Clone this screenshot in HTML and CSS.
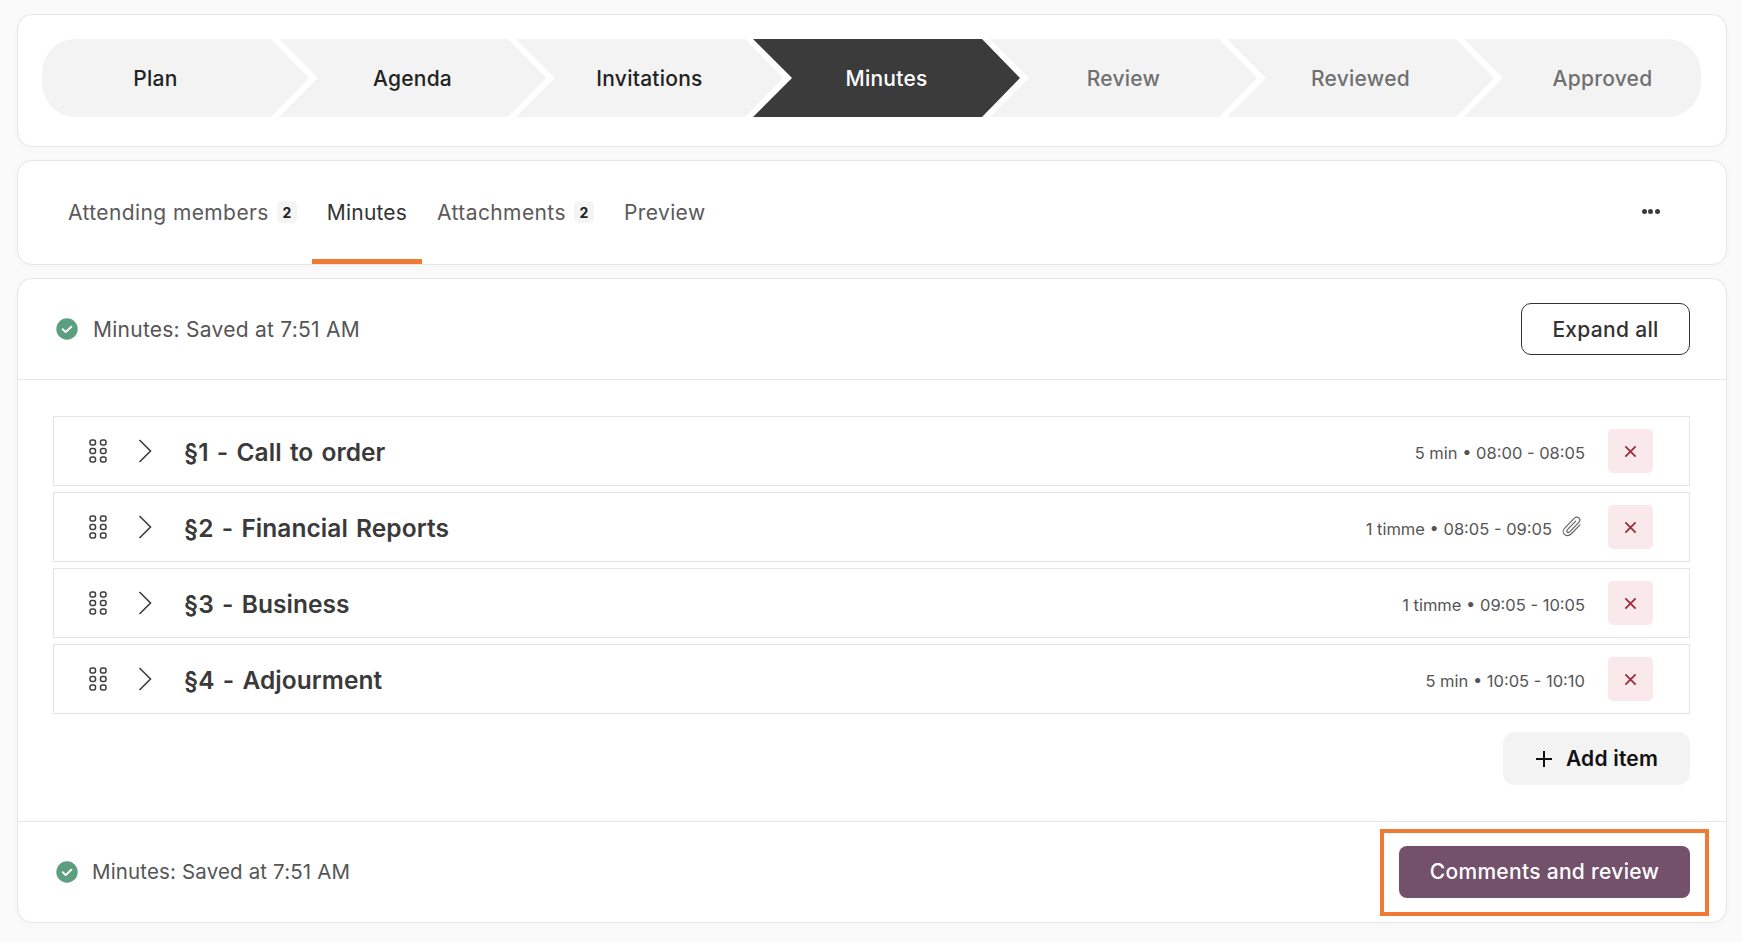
FILE: index.html
```html
<!DOCTYPE html>
<html lang="en">
<head>
<meta charset="utf-8">
<title>Minutes</title>
<link rel="stylesheet" href="styles.css">
</head>
<body>
<svg class="defs" width="0" height="0" aria-hidden="true">
  <symbol id="check" viewBox="0 0 22 22"><circle cx="11" cy="11" r="10.7" fill="#5c9e80"/><path d="M6.8 11.3l2.9 2.8 5.6-5.4" fill="none" stroke="#fff" stroke-width="2" stroke-linecap="round" stroke-linejoin="round"/></symbol>
  <symbol id="drag" viewBox="0 0 18 24"><g fill="none" stroke="#3c3c3c" stroke-width="1.5"><rect x="1" y="1" width="5.5" height="5" rx="2"/><rect x="11.5" y="1" width="5.5" height="5" rx="2"/><rect x="1" y="9.5" width="5.5" height="5" rx="2"/><rect x="11.5" y="9.5" width="5.5" height="5" rx="2"/><rect x="1" y="18" width="5.5" height="5" rx="2"/><rect x="11.5" y="18" width="5.5" height="5" rx="2"/></g></symbol>
  <symbol id="chev" viewBox="0 0 14 24"><path d="M1.5 1l11 11-11 11" fill="none" stroke="#3c3c3c" stroke-width="1.6"/></symbol>
  <symbol id="x" viewBox="0 0 14 14"><path d="M1.5 1.5l11 11M12.5 1.5l-11 11" fill="none" stroke="#9a2f3e" stroke-width="2"/></symbol>
</svg>

<section class="card stepper-card">
  <ol class="stepper">
    <li class="step step-first done">Plan</li>
    <li class="step done">Agenda</li>
    <li class="step done">Invitations</li>
    <li class="step active">Minutes</li>
    <li class="step">Review</li>
    <li class="step">Reviewed</li>
    <li class="step step-last">Approved</li>
  </ol>
</section>

<nav class="card tabs-card">
  <a class="tab">Attending members <span class="badge">2</span></a>
  <a class="tab tab-active">Minutes</a>
  <a class="tab">Attachments <span class="badge">2</span></a>
  <a class="tab">Preview</a>
  <span class="more"><i></i><i></i><i></i></span>
</nav>

<main class="card main-card">
  <header class="bar bar-top">
    <span class="saved"><svg class="ok"><use href="#check"/></svg>Minutes: Saved at 7:51 AM</span>
    <button class="btn-outline">Expand all</button>
  </header>
  <div class="content">
    <ul class="rows">
      <li class="row">
        <svg class="drag"><use href="#drag"/></svg><svg class="chev"><use href="#chev"/></svg>
        <h3 class="title">§1 - Call to order</h3>
        <span class="meta">5 min • 08:00 - 08:05</span>
        <button class="del"><svg class="x"><use href="#x"/></svg></button>
      </li>
      <li class="row">
        <svg class="drag"><use href="#drag"/></svg><svg class="chev"><use href="#chev"/></svg>
        <h3 class="title">§2 - Financial Reports</h3>
        <span class="meta">1 timme • 08:05 - 09:05</span>
        <svg class="clip" viewBox="0 0 20 20"><path d="M16.6 8.2l-7.4 7.6c-1.7 1.7-4.2 1.8-5.6.4s-1.2-3.8.5-5.5l7.7-7.9c1.2-1.2 3-1.4 4-.4s.9 2.7-.3 3.9l-7.5 7.7c-.6.6-1.5.7-2 .2s-.4-1.4.2-2l6.9-7.1" fill="none" stroke="#666" stroke-width="1" stroke-linecap="round"/></svg>
        <button class="del del-clip"><svg class="x"><use href="#x"/></svg></button>
      </li>
      <li class="row">
        <svg class="drag"><use href="#drag"/></svg><svg class="chev"><use href="#chev"/></svg>
        <h3 class="title">§3 - Business</h3>
        <span class="meta">1 timme • 09:05 - 10:05</span>
        <button class="del"><svg class="x"><use href="#x"/></svg></button>
      </li>
      <li class="row">
        <svg class="drag"><use href="#drag"/></svg><svg class="chev"><use href="#chev"/></svg>
        <h3 class="title">§4 - Adjourment</h3>
        <span class="meta">5 min • 10:05 - 10:10</span>
        <button class="del"><svg class="x"><use href="#x"/></svg></button>
      </li>
    </ul>
    <div class="add-wrap">
      <button class="btn-add"><svg class="plus" viewBox="0 0 18 18"><path d="M9 1v16M1 9h16" fill="none" stroke="#111" stroke-width="2"/></svg>Add item</button>
    </div>
  </div>
  <footer class="bar bar-bottom">
    <span class="saved saved-small"><svg class="ok"><use href="#check"/></svg>Minutes: Saved at 7:51 AM</span>
    <button class="btn-primary">Comments and review</button>
  </footer>
</main>
</body>
</html>
```

FILE: styles.css
```css
* { box-sizing: border-box; }
html, body { margin: 0; }
body {
  width: 1742px;
  height: 942px;
  overflow: hidden;
  padding: 14px 15px 0 17px;
  background: #fafafa;
  font-family: Inter, "Noto Sans", sans-serif;
  color: #333;
  display: flex;
  flex-direction: column;
  gap: 13px;
}
.defs { position: absolute; }
button { font-family: inherit; cursor: pointer; }
.card {
  background: #fff;
  border: 1px solid #e6e6e6;
  border-radius: 15px;
  box-shadow: 0 2px 8px rgba(0, 0, 0, .025);
}

/* stepper */
.stepper-card { height: 133px; padding: 24px 25px 0 24px; }
.stepper {
  list-style: none;
  margin: 0;
  padding: 0;
  display: grid;
  grid-template-columns: repeat(7, 1fr);
  height: 78px;
}
.step {
  width: calc(100% + 30px);
  height: 78px;
  padding-top: 1px;
  display: flex;
  align-items: center;
  justify-content: center;
  background: #f3f3f3;
  color: #707070;
  font-size: 21px;
  letter-spacing: .25px;
  font-weight: 500;
  clip-path: polygon(0 0, calc(100% - 38px) 0, 100% 50%, calc(100% - 38px) 100%, 0 100%, 39px 50%);
}
.done { color: #222; }
.active { background: #3b3b3b; color: #fff; }
.step-first {
  padding-right: 40px;
  border-radius: 34px 0 0 34px;
  clip-path: polygon(0 0, calc(100% - 38px) 0, 100% 50%, calc(100% - 38px) 100%, 0 100%);
}
.step-last {
  width: 100%;
  padding-left: 40px;
  border-radius: 0 34px 34px 0;
  clip-path: polygon(0 0, 100% 0, 100% 100%, 0 100%, 39px 50%);
}

/* tabs */
.tabs-card {
  height: 105px;
  padding: 0 36px 0 35px;
  display: flex;
  align-items: stretch;
}
.tab {
  padding: 4px 15px 0;
  display: flex;
  align-items: center;
  gap: 8px;
  font-size: 21px;
  letter-spacing: .4px;
  color: #5a5a5a;
  border-bottom: 5px solid transparent;
}
.tab-active { color: #333; letter-spacing: .2px; border-bottom-color: #f07a33; }
.badge {
  width: 20px;
  height: 22px;
  border-radius: 5px;
  background: #f4f4f4;
  color: #222;
  font-size: 14px;
  letter-spacing: 0;
  font-weight: 700;
  display: flex;
  align-items: center;
  justify-content: center;
}
.more { margin-left: auto; align-self: center; display: flex; gap: 1.6px; margin-right: 30px; margin-top: -2px; }
.more i { width: 5px; height: 5px; border-radius: 50%; background: #3c3c3c; }

/* main card */
.main-card { height: 645px; display: flex; flex-direction: column; }
.bar { display: flex; align-items: center; justify-content: space-between; }
.bar-top { height: 101px; padding: 0 36px 0 38px; border-bottom: 1px solid #e6e6e6; }
.bar-bottom { height: 101px; padding: 0 36px 1px 38px; border-top: 1px solid #e6e6e6; margin-top: auto; }
.saved { display: flex; align-items: center; gap: 15px; font-size: 21px; letter-spacing: .25px; color: #555; }
.saved-small { font-size: 20.5px; letter-spacing: .15px; gap: 14px; }
.ok { width: 22px; height: 22px; flex: none; }
.btn-outline {
  width: 169px;
  height: 52px;
  background: #fff;
  border: 1px solid #333;
  border-radius: 10px;
  font-size: 21px;
  letter-spacing: .3px;
  font-weight: 500;
  color: #333;
}
.content { padding: 36px 36px 0 35px; }
.rows { list-style: none; margin: 0; padding: 0; display: flex; flex-direction: column; gap: 6px; }
.row {
  height: 70px;
  border: 1px solid #e4e4e4;
  padding: 0 36px 0 35px;
  display: flex;
  align-items: center;
}
.drag { width: 18px; height: 24px; flex: none; }
.chev { width: 14px; height: 24px; margin-left: 31px; flex: none; }
.title { margin: 2px 0 0 32px; font-size: 24.5px; letter-spacing: .05px; word-spacing: 2px; font-weight: 600; color: #3a3a3a; }
.meta { margin-left: auto; margin-top: 4px; font-size: 16.5px; color: #555; }
.clip { width: 24px; height: 24px; margin-left: 8px; flex: none; }
.del {
  width: 45px;
  height: 44px;
  margin-left: 23px;
  border: 0;
  border-radius: 5px;
  background: #fae9ea;
  padding: 0;
  display: flex;
  align-items: center;
  justify-content: center;
}
.del-clip { margin-left: 24px; }
.x { width: 13px; height: 13px; }
.add-wrap { display: flex; justify-content: flex-end; margin-top: 18px; }
.btn-add {
  width: 187px;
  height: 53px;
  border: 0;
  border-radius: 12px;
  background: #f3f3f3;
  font-size: 21px;
  letter-spacing: .2px;
  font-weight: 600;
  color: #111;
  display: flex;
  align-items: center;
  justify-content: center;
  gap: 13px;
}
.plus { width: 18px; height: 18px; }
.btn-primary {
  position: relative;
  width: 291px;
  height: 52px;
  border: 0;
  border-radius: 8px;
  background: #73516b;
  color: #fff;
  font-size: 21px;
  letter-spacing: .3px;
  font-weight: 500;
}
.btn-primary::after {
  content: "";
  position: absolute;
  inset: -17px -19px -18px -19px;
  border: 4px solid #f07a33;
}
```
